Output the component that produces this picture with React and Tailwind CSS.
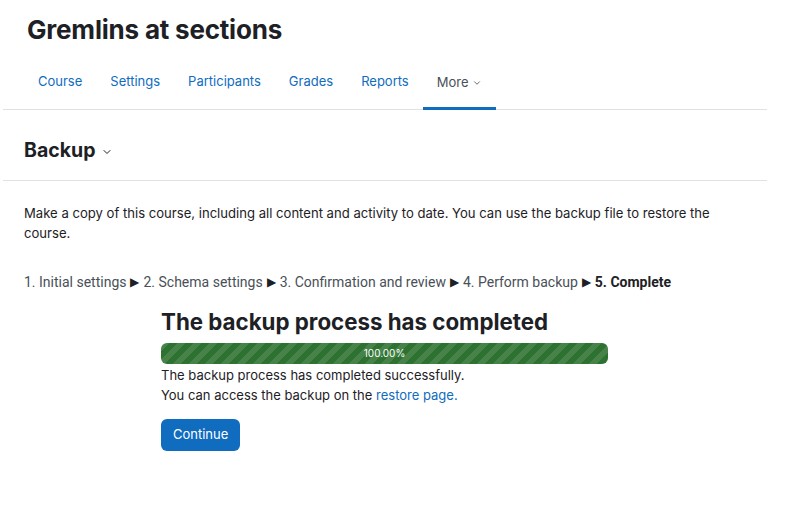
import { ChevronDown } from "lucide-react";

const tabs = ["Course", "Settings", "Participants", "Grades", "Reports"];

const steps = [
  "1. Initial settings",
  "2. Schema settings",
  "3. Confirmation and review",
  "4. Perform backup",
];

export default function App() {
  return (
    <div className="w-[802px] h-[526px] bg-white text-[#1d2125] font-['Inter',sans-serif]">
      <div className="w-[764px] ml-[3px]">
        <div className="pl-[24px] pt-[12px] h-[52px]">
          <h1 className="text-[26px] leading-[36px] font-bold tracking-[-0.2px]">Gremlins at sections</h1>
        </div>

        <nav className="flex pl-[21px] border-b border-[#dee2e6] h-[58px] items-stretch">
          {tabs.map((t) => (
            <a key={t} href="#" className="px-[14px] pt-[3px] flex items-center text-[13px] text-[#0f6cbf]">
              {t}
            </a>
          ))}
          <a href="#" className="px-[14px] flex items-center gap-[3px] text-[13px] text-[#495057] border-b-[3px] border-[#0f6cbf] -mb-px pt-[6px]">
            More
            <ChevronDown size={10} strokeWidth={2} />
          </a>
        </nav>

        <div className="flex items-center gap-[6px] pl-[21px] h-[71px] pt-[11px] border-b border-[#dee2e6]">
          <h2 className="text-[19.5px] font-bold">Backup</h2>
          <ChevronDown size={12} strokeWidth={2} className="mt-[3px]" />
        </div>

        <div className="pl-[21px] pr-[20px] pt-[22px]">
          <p className="text-[13.1px] leading-[20px]">
            Make a copy of this course, including all content and activity to date. You can use the backup file to restore the course.
          </p>

          <div className="mt-[29px] text-[14px] leading-[20px] text-[#495057] font-['Liberation_Sans_Narrow','Roboto',sans-serif] flex items-center gap-[4px]">
            {steps.map((s) => (
              <span key={s} className="flex items-center gap-[4px]">
                {s}
                <span className="text-[#1d2125] text-[12px]">▶</span>
              </span>
            ))}
            <b className="text-[#1d2125]">5. Complete</b>
          </div>

          <div className="ml-[137px] w-[447px] mt-[15px]">
            <h3 className="text-[22.3px] leading-[30px] font-bold">The backup process has completed</h3>
            <div className="mt-[6px] h-[21px] rounded-[6px] overflow-hidden bg-[#2d7230] bg-[linear-gradient(135deg,rgba(255,255,255,0.12)_25%,transparent_25%,transparent_50%,rgba(255,255,255,0.12)_50%,rgba(255,255,255,0.12)_75%,transparent_75%,transparent)] bg-[length:16px_16px] flex items-center justify-center">
              <span className="text-[10px] text-white">100.00%</span>
            </div>
            <p className="text-[13px] leading-[20px] mt-[1px]">The backup process has completed successfully.</p>
            <p className="text-[13px] leading-[20px]">
              You can access the backup on the <a href="#" className="text-[#0f6cbf]">restore page.</a>
            </p>
            <button className="mt-[14px] h-[32px] px-[12px] rounded-[6px] bg-[#0f6cbf] text-white text-[13px]">
              Continue
            </button>
          </div>
        </div>
      </div>
    </div>
  );
}
